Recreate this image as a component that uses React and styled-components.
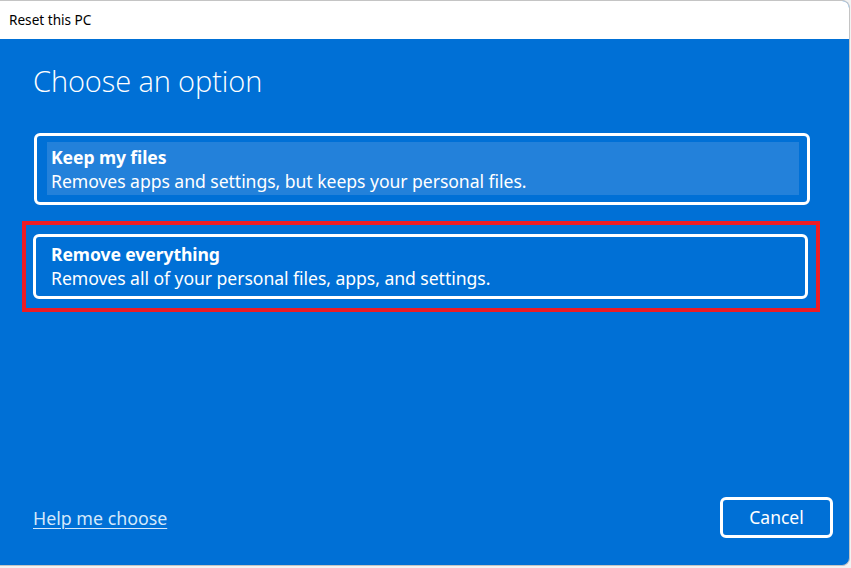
import React from 'react';
import styled, { createGlobalStyle } from 'styled-components';

const GlobalStyle = createGlobalStyle`
  html, body {
    margin: 0;
    padding: 0;
    background: #f2f2f2;
  }
  body {
    font-family: "Noto Sans", "Open Sans", sans-serif;
  }
`;

const Window = styled.div`
  box-sizing: border-box;
  width: 850px;
  height: 566px;
  display: flex;
  flex-direction: column;
  border: 1px solid #c4c4c4;
  border-left: none;
  border-radius: 0 8px 8px 0;
  overflow: hidden;
  background: #0070d6;
`;

const TitleBar = styled.div`
  height: 37px;
  flex: none;
  display: flex;
  align-items: center;
  padding-left: 9px;
  background: #ffffff;
  color: #000;
  font-size: 13.6px;
  padding-bottom: 1px;
`;

const Body = styled.div`
  flex: 1;
  display: flex;
  flex-direction: column;
  padding: 23px 16px 27px 33px;
  color: #fff;
`;

const Heading = styled.h1`
  margin: 0 0 33px;
  font-family: "Open Sans", "Noto Sans", sans-serif;
  font-weight: 300;
  font-size: 29px;
  line-height: 38px;
  letter-spacing: -0.1px;
`;

const Options = styled.div`
  display: flex;
  flex-direction: column;
  gap: 29px;
  margin-right: 23px;
`;

const Card = styled.div`
  position: relative;
  box-sizing: border-box;
  height: ${({ $h }) => $h}px;
  margin-left: ${({ $shift }) => $shift || 0}px;
  margin-right: ${({ $trim }) => $trim || 0}px;
  border: 3px solid #fff;
  border-radius: 6px;
  padding: ${({ $focused }) => ($focused ? '6px 8px 7px 10px' : '6px 14px 0 15px')};
  display: flex;
`;

const Focus = styled.div`
  flex: 1;
  padding: 4px 4px 0;
  background: ${({ $on }) => ($on ? '#2381da' : 'transparent')};
`;

const OptionTitle = styled.div`
  font-weight: 700;
  font-size: 17.6px;
  line-height: 23px;
  letter-spacing: -0.1px;
`;

const OptionText = styled.div`
  font-size: 17.6px;
  line-height: 25px;
  letter-spacing: -0.05px;
`;

const Highlight = styled.div`
  position: absolute;
  left: -14px;
  right: -15px;
  top: -16px;
  bottom: -16px;
  border: 4px solid #ec1c24;
  pointer-events: none;
`;

const Footer = styled.div`
  margin-top: auto;
  display: flex;
  align-items: center;
  justify-content: space-between;
`;

const HelpLink = styled.a`
  color: #d4e8fb;
  font-size: 17.8px;
  text-decoration: underline;
  text-underline-offset: 3px;
  text-decoration-thickness: 1px;
  cursor: pointer;
`;

const CancelButton = styled.button`
  box-sizing: border-box;
  width: 113px;
  height: 41px;
  border: 3px solid #fff;
  border-radius: 6px;
  background: transparent;
  color: #fff;
  font-family: "Noto Sans", "Open Sans", sans-serif;
  font-size: 17.5px;
  padding: 0 0 2px;
`;

function Option({ title, text, focused, height, shift, trim, marked }) {
  return (
    <Card $h={height} $focused={focused} $shift={shift} $trim={trim}>
      {focused ? (
        <Focus $on>
          <OptionTitle>{title}</OptionTitle>
          <OptionText>{text}</OptionText>
        </Focus>
      ) : (
        <div>
          <OptionTitle>{title}</OptionTitle>
          <OptionText>{text}</OptionText>
        </div>
      )}
      {marked && <Highlight />}
    </Card>
  );
}

export default function App() {
  return (
    <>
      <GlobalStyle />
      <Window>
        <TitleBar>Reset this PC</TitleBar>
        <Body>
          <Heading>Choose an option</Heading>
          <Options>
            <Option
              focused
              shift={1}
              height={72}
              title="Keep my files"
              text="Removes apps and settings, but keeps your personal files."
            />
            <Option
              marked
              trim={2}
              height={65}
              title="Remove everything"
              text="Removes all of your personal files, apps, and settings."
            />
          </Options>
          <Footer>
            <HelpLink>Help me choose</HelpLink>
            <CancelButton>Cancel</CancelButton>
          </Footer>
        </Body>
      </Window>
    </>
  );
}
